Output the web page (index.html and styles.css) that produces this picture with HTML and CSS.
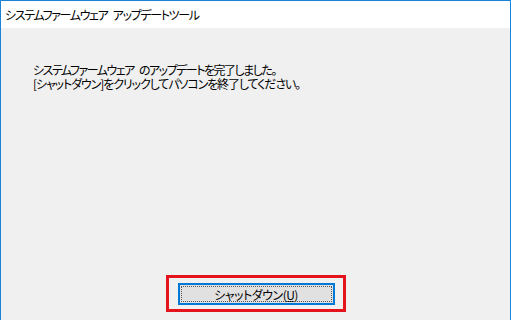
FILE: index.html
```html
<!DOCTYPE html>
<html lang="ja">
<head>
    <meta charset="UTF-8">
    <title>システムファームウェア アップデートツール</title>
    <link rel="stylesheet" href="styles.css">
</head>
<body>
    <div class="window">
        <div class="titlebar">システムファームウェア アップデートツール</div>
        <div class="content">
            <p class="message line-1">システムファームウェア のアップデートを完了しました。</p>
            <p class="message line-2">[シャットダウン]をクリックしてパソコンを終了してください。</p>
        </div>
        <div class="footer">
            <div class="highlight">
                <button class="btn">シャットダウン(<u>U</u>)</button>
            </div>
        </div>
    </div>
</body>
</html>
```

FILE: styles.css
```css
html, body { margin: 0; padding: 0; }
body { font-family: "Noto Sans CJK JP", "Noto Sans", sans-serif; font-size: 12px; color: #000; background: #f0f0f0; }
.window { box-sizing: border-box; width: 511px; height: 320px; display: flex; flex-direction: column; border: 1px solid #1883d7; border-bottom: none; background: #f0f0f0; }
.titlebar { height: 27px; line-height: 28px; padding-left: 4px; background: #fff; font-feature-settings: "palt"; letter-spacing: -1.35px; word-spacing: 4px; }
.content { flex: 1; padding: 35px 0 0 32px; }
.message { margin: 0; line-height: 14px; font-feature-settings: "palt"; white-space: nowrap; }
.line-1 { letter-spacing: -1.5px; word-spacing: 4px; }
.line-2 { letter-spacing: -1.1px; }
.footer { display: flex; justify-content: center; padding-bottom: 8px; }
.highlight { box-sizing: border-box; width: 180px; height: 37px; border: 3px solid #e5131b; padding: 5px 8px 4px 9px; }
.btn { box-sizing: border-box; width: 157px; height: 22px; margin: 0; padding: 0; border: 1px solid #0078d7; outline: 1px dotted #555; outline-offset: -4px; background: #e1e1e1; box-shadow: inset 0 0 0 1px #0078d7; font-family: inherit; font-size: 12px; font-feature-settings: "palt"; letter-spacing: -0.5px; color: #000; }
```
